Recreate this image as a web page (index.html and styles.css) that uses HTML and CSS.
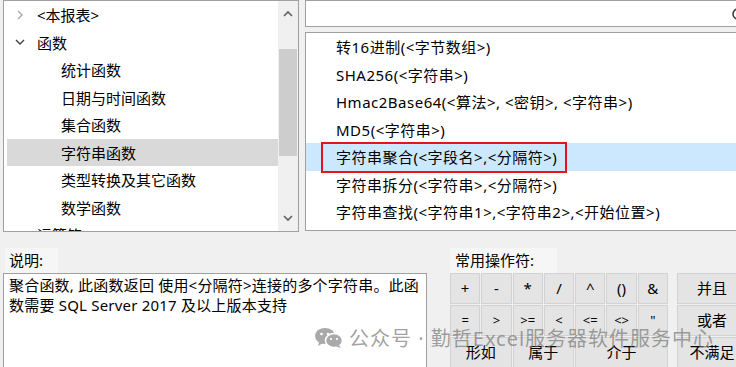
FILE: index.html
```html
<!DOCTYPE html>
<html>

<head>
    <meta charset="UTF-8">
    <title>函数</title>
    <link rel="stylesheet" href="styles.css">
</head>

<body>
    <div class="window">
        <div class="top">
            <div class="tree">
                <div class="tree-items">
                    <div class="node">
                        <span class="chev">
                            <svg width="10" height="10" viewBox="0 0 10 10"><polyline points="3,1 7,5 3,9" fill="none" stroke="#a8a8a8" stroke-width="1.4"/></svg>
                        </span>
                        <span>&lt;本报表&gt;</span>
                    </div>
                    <div class="node">
                        <span class="chev">
                            <svg width="10" height="10" viewBox="0 0 10 10"><polyline points="1,3 5,7 9,3" fill="none" stroke="#404040" stroke-width="1.4"/></svg>
                        </span>
                        <span>函数</span>
                    </div>
                    <div class="node child">统计函数</div>
                    <div class="node child">日期与时间函数</div>
                    <div class="node child">集合函数</div>
                    <div class="node child selected">字符串函数</div>
                    <div class="node child">类型转换及其它函数</div>
                    <div class="node child">数学函数</div>
                    <div class="node">
                        <span class="chev"></span>
                        <span>运算符</span>
                    </div>
                </div>
                <div class="scrollbar">
                    <div class="arrow">
                        <svg width="10" height="8" viewBox="0 0 10 8"><polyline points="1,6 5,2 9,6" fill="none" stroke="#606060" stroke-width="1.6"/></svg>
                    </div>
                    <div class="track">
                        <div class="thumb"></div>
                    </div>
                    <div class="arrow">
                        <svg width="10" height="8" viewBox="0 0 10 8"><polyline points="1,2 5,6 9,2" fill="none" stroke="#606060" stroke-width="1.6"/></svg>
                    </div>
                </div>
            </div>

            <div class="right">
                <div class="search">
                    <svg class="search-icon" width="14" height="14" viewBox="0 0 14 14"><circle cx="7" cy="7" r="5" fill="none" stroke="#333" stroke-width="1.5"/></svg>
                </div>
                <div class="func-list">
                    <div class="func">转16进制(&lt;字节数组&gt;)</div>
                    <div class="func">SHA256(&lt;字符串&gt;)</div>
                    <div class="func">Hmac2Base64(&lt;算法&gt;, &lt;密钥&gt;, &lt;字符串&gt;)</div>
                    <div class="func">MD5(&lt;字符串&gt;)</div>
                    <div class="func active">字符串聚合(&lt;字段名&gt;,&lt;分隔符&gt;)<span class="mark"></span></div>
                    <div class="func">字符串拆分(&lt;字符串&gt;,&lt;分隔符&gt;)</div>
                    <div class="func">字符串查找(&lt;字符串1&gt;,&lt;字符串2&gt;,&lt;开始位置&gt;)</div>
                </div>
            </div>
        </div>

        <div class="bottom">
            <div class="desc-col">
                <div class="label desc-label">说明:</div>
                <div class="desc">聚合函数, 此函数返回 使用&lt;分隔符&gt;连接的多个字符串。此函<br>数需要 SQL Server 2017 及以上版本支持</div>
            </div>

            <div class="ops-col">
                <div class="label ops-label">常用操作符:</div>
                <div class="ops">
                    <div class="op-grid">
                        <button class="op">+</button>
                        <button class="op">-</button>
                        <button class="op">*</button>
                        <button class="op">/</button>
                        <button class="op">^</button>
                        <button class="op">()</button>
                        <button class="op">&amp;</button>
                        <button class="op small">=</button>
                        <button class="op small">&gt;</button>
                        <button class="op small">&gt;=</button>
                        <button class="op small">&lt;</button>
                        <button class="op small">&lt;=</button>
                        <button class="op small">&lt;&gt;</button>
                        <button class="op small">"</button>
                        <button class="op span2">形如</button>
                        <button class="op span2">属于</button>
                        <button class="op span3">介于</button>
                    </div>
                    <div class="logic">
                        <button class="op">并且</button>
                        <button class="op">或者</button>
                        <button class="op">不满足</button>
                    </div>
                </div>
            </div>
        </div>
    </div>

    <div class="watermark">
        <svg width="28" height="20" viewBox="0 0 28 20">
            <ellipse cx="10" cy="8" rx="10" ry="8" fill="#a9a9a9"/>
            <path d="M4 14 L3 18 L8 15 Z" fill="#a9a9a9"/>
            <ellipse cx="19" cy="12.5" rx="8.5" ry="7" fill="#a9a9a9" stroke="#fff" stroke-width="1.5"/>
            <path d="M24 17 L26 20 L21 18.5 Z" fill="#a9a9a9"/>
            <circle cx="6.5" cy="6" r="1.3" fill="#fff"/>
            <circle cx="13" cy="6" r="1.3" fill="#fff"/>
            <circle cx="16" cy="11" r="1.1" fill="#fff"/>
            <circle cx="22" cy="11" r="1.1" fill="#fff"/>
        </svg>
        <span>公众号 · 勤哲Excel服务器软件服务中心</span>
    </div>
</body>

</html>
```

FILE: styles.css
```css
body {
    margin: 0;
    padding: 0;
    width: 736px;
    height: 367px;
    overflow: hidden;
    background: #f0f0f0;
    font-family: 'Noto Sans', 'Noto Sans CJK SC', sans-serif;
    font-size: 15px;
    color: #000;
    position: relative;
}

.window {
    width: 736px;
    height: 367px;
    overflow: hidden;
}

.top {
    display: flex;
    height: 232px;
}

.tree {
    flex-shrink: 0;
    margin-left: 3px;
    width: 296px;
    height: 232px;
    box-sizing: border-box;
    border: 1px solid #a0a0a0;
    background: #fff;
    display: flex;
    overflow: hidden;
}

.tree-items {
    flex: 1;
    padding-left: 3px;
    overflow: hidden;
}

.node {
    height: 27.5px;
    display: flex;
    align-items: center;
    white-space: nowrap;
}

.chev {
    width: 10px;
    height: 10px;
    margin-left: 8px;
    margin-right: 12px;
    display: flex;
}

.child {
    padding-left: 54px;
}

.selected {
    background: #d9d9d9;
}

.scrollbar {
    width: 20px;
    background: #f0f0f0;
    display: flex;
    flex-direction: column;
}

.arrow {
    height: 26px;
    display: flex;
    align-items: center;
    justify-content: center;
}

.track {
    flex: 1;
    padding: 22px 1px 0;
}

.thumb {
    height: 107px;
    background: #cdcdcd;
}

.right {
    flex-shrink: 0;
    margin-left: 6px;
    width: 460px;
    display: flex;
    flex-direction: column;
}

.search {
    height: 27px;
    box-sizing: border-box;
    border: 1px solid #a0a0a0;
    background: #fff;
    position: relative;
}

.search-icon {
    position: absolute;
    left: 425px;
    top: 6px;
}

.func-list {
    margin-top: 5px;
    height: 199px;
    box-sizing: border-box;
    border: 1px solid #a0a0a0;
    background: #fff;
    overflow: hidden;
}

.func {
    height: 27.5px;
    display: flex;
    align-items: center;
    padding-left: 30px;
    white-space: nowrap;
    letter-spacing: 0.5px;
    position: relative;
}

.func.active {
    background: #cce8ff;
}

.mark {
    position: absolute;
    left: 15px;
    top: -1px;
    width: 246px;
    height: 31px;
    box-sizing: border-box;
    border: 2px solid #e8141b;
}

.bottom {
    display: flex;
    padding-top: 16px;
}

.label {
    display: inline-block;
    height: 25px;
    line-height: 25px;
    background: #f6f6f6;
    box-sizing: border-box;
}

.desc-col {
    flex-shrink: 0;
    margin-left: 3px;
    width: 424px;
}

.desc-label {
    margin-left: 2px;
    width: 53px;
    padding-left: 4px;
}

.desc {
    height: 100px;
    box-sizing: border-box;
    border: 1px solid #a0a0a0;
    background: #fff;
    padding: 1px 5px;
    line-height: 20px;
    font-size: 15px;
    letter-spacing: 0.2px;
    white-space: nowrap;
}

.ops-col {
    flex-shrink: 0;
    margin-left: 23px;
}

.ops-label {
    width: 107px;
    padding-left: 5px;
}

.ops {
    display: flex;
    gap: 9px;
}

.op-grid {
    flex-shrink: 0;
    width: 218px;
    display: grid;
    grid-template-columns: repeat(7, 1fr);
    grid-auto-rows: 31px;
    gap: 1px;
}

.op {
    margin: 0;
    padding: 0;
    border: 1px solid #d2d2d2;
    background: #e4e4e4;
    font-family: 'Noto Sans', 'Noto Sans CJK SC', sans-serif;
    font-size: 15px;
    color: #000;
    line-height: 1;
}

.op.small {
    font-size: 13px;
}

.span2 {
    grid-column: span 2;
}

.span3 {
    grid-column: span 3;
}

.logic {
    flex-shrink: 0;
    width: 70px;
    display: grid;
    grid-auto-rows: 31px;
    gap: 1px;
}

.watermark {
    position: absolute;
    left: 315px;
    top: 323px;
    display: flex;
    align-items: center;
    gap: 6px;
    font-size: 20px;
    letter-spacing: 1px;
    color: rgba(120, 120, 120, 0.7);
    white-space: nowrap;
}
```
